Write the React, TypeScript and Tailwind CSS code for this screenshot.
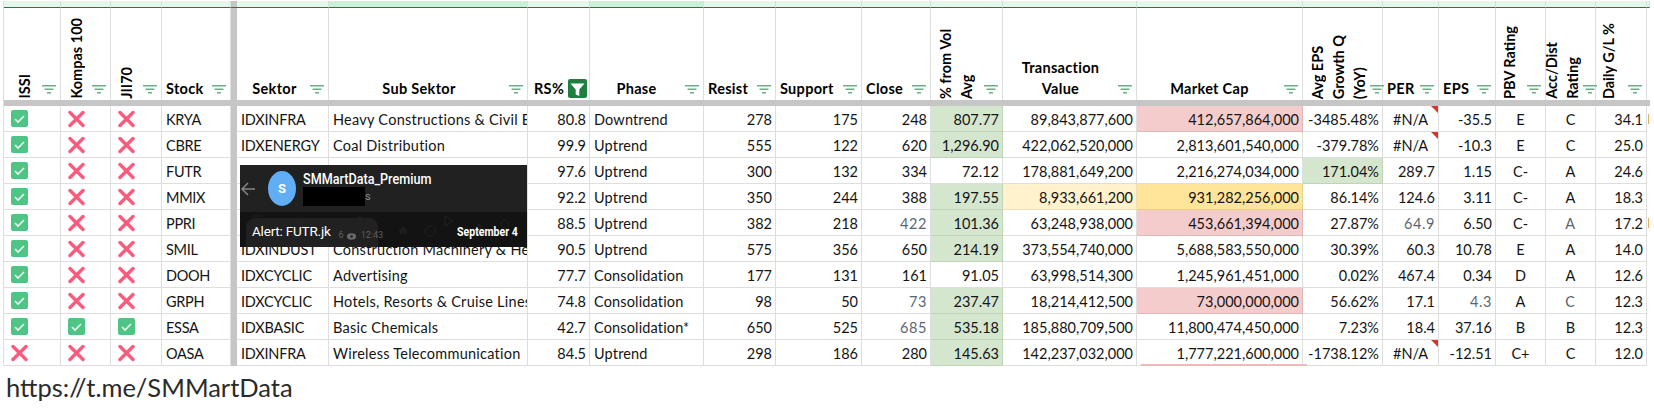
import type { ReactNode } from "react";

type Tone = "g" | "p" | "ly" | "gold" | undefined;

const TONES: Record<string, string> = {
  g: "bg-[#d5e6cf] border-[#bdd4b5]",
  p: "bg-[#f4cccc] border-[#e5b5b5]",
  ly: "bg-[#fff2cc] border-[#eedfb5]",
  gold: "bg-[#ffe599] border-[#e8cf8a]",
};

const WIDTHS = [57, 50, 51, 69, 6, 92, 199, 62, 114, 72, 86, 69, 72, 134, 166, 80, 56, 57, 50, 50, 51, 3];

type Row = {
  flags: [boolean, boolean, boolean];
  stock: string;
  sektor: string;
  sub: string;
  rs: string;
  phase: string;
  resist: string;
  support: string;
  close: string;
  vol: string;
  volTone?: Tone;
  tx: string;
  txTone?: Tone;
  cap: string;
  capTone?: Tone;
  growth: string;
  growthTone?: Tone;
  per: string;
  eps: string;
  pbv: string;
  acc: string;
  daily: string;
};

const ROWS: Row[] = [
  { flags: [true, false, false], stock: "KRYA", sektor: "IDXINFRA", sub: "Heavy Constructions & Civil Engineering", rs: "80.8", phase: "Downtrend", resist: "278", support: "175", close: "248", vol: "807.77", volTone: "g", tx: "89,843,877,600", cap: "412,657,864,000", capTone: "p", growth: "-3485.48%", per: "#N/A", eps: "-35.5", pbv: "E", acc: "C", daily: "34.1" },
  { flags: [true, false, false], stock: "CBRE", sektor: "IDXENERGY", sub: "Coal Distribution", rs: "99.9", phase: "Uptrend", resist: "555", support: "122", close: "620", vol: "1,296.90", volTone: "g", tx: "422,062,520,000", cap: "2,813,601,540,000", growth: "-379.78%", per: "#N/A", eps: "-10.3", pbv: "E", acc: "C", daily: "25.0" },
  { flags: [true, false, false], stock: "FUTR", sektor: "", sub: "", rs: "97.6", phase: "Uptrend", resist: "300", support: "132", close: "334", vol: "72.12", tx: "178,881,649,200", cap: "2,216,274,034,000", growth: "171.04%", growthTone: "g", per: "289.7", eps: "1.15", pbv: "C-", acc: "A", daily: "24.6" },
  { flags: [true, false, false], stock: "MMIX", sektor: "", sub: "", rs: "92.2", phase: "Uptrend", resist: "350", support: "244", close: "388", vol: "197.55", volTone: "g", tx: "8,933,661,200", txTone: "ly", cap: "931,282,256,000", capTone: "gold", growth: "86.14%", per: "124.6", eps: "3.11", pbv: "C-", acc: "A", daily: "18.3" },
  { flags: [true, false, false], stock: "PPRI", sektor: "", sub: "", rs: "88.5", phase: "Uptrend", resist: "382", support: "218", close: "422", vol: "101.36", volTone: "g", tx: "63,248,938,000", cap: "453,661,394,000", capTone: "p", growth: "27.87%", per: "64.9", eps: "6.50", pbv: "C-", acc: "A", daily: "17.2" },
  { flags: [true, false, false], stock: "SMIL", sektor: "IDXINDUST", sub: "Construction Machinery & Heavy Equipment", rs: "90.5", phase: "Uptrend", resist: "575", support: "356", close: "650", vol: "214.19", volTone: "g", tx: "373,554,740,000", cap: "5,688,583,550,000", growth: "30.39%", per: "60.3", eps: "10.78", pbv: "E", acc: "A", daily: "14.0" },
  { flags: [true, false, false], stock: "DOOH", sektor: "IDXCYCLIC", sub: "Advertising", rs: "77.7", phase: "Consolidation", resist: "177", support: "131", close: "161", vol: "91.05", tx: "63,998,514,300", cap: "1,245,961,451,000", growth: "0.02%", per: "467.4", eps: "0.34", pbv: "D", acc: "A", daily: "12.6" },
  { flags: [true, false, false], stock: "GRPH", sektor: "IDXCYCLIC", sub: "Hotels, Resorts & Cruise Lines", rs: "74.8", phase: "Consolidation", resist: "98", support: "50", close: "73", vol: "237.47", volTone: "g", tx: "18,214,412,500", cap: "73,000,000,000", capTone: "p", growth: "56.62%", per: "17.1", eps: "4.3", pbv: "A", acc: "C", daily: "12.3" },
  { flags: [true, true, true], stock: "ESSA", sektor: "IDXBASIC", sub: "Basic Chemicals", rs: "42.7", phase: "Consolidation*", resist: "650", support: "525", close: "685", vol: "535.18", volTone: "g", tx: "185,880,709,500", cap: "11,800,474,450,000", growth: "7.23%", per: "18.4", eps: "37.16", pbv: "B", acc: "B", daily: "12.3" },
  { flags: [false, false, false], stock: "OASA", sektor: "IDXINFRA", sub: "Wireless Telecommunication", rs: "84.5", phase: "Uptrend", resist: "298", support: "186", close: "280", vol: "145.63", volTone: "g", tx: "142,237,032,000", cap: "1,777,221,600,000", growth: "-1738.12%", per: "#N/A", eps: "-12.51", pbv: "C+", acc: "C", daily: "12.0" },
];

function FilterIcon() {
  return (
    <svg width="14" height="9" viewBox="0 0 14 9" className="shrink-0">
      <path d="M0 .75h14M2.5 4.25h9M5 7.75h4" stroke="#6fae84" strokeWidth="1.4" />
    </svg>
  );
}

function ActiveFilter() {
  return (
    <svg width="19" height="19" viewBox="0 0 19 19" className="shrink-0">
      <rect width="19" height="19" rx="2" fill="#1f7f3f" />
      <path d="M2.5 4.5h14L11.3 10.5V17L7.7 15.4V10.5z" fill="#fff" />
    </svg>
  );
}

function Check() {
  return (
    <svg width="17" height="17" viewBox="0 0 17 17">
      <rect width="17" height="17" rx="2" fill="#4fc585" />
      <path d="M4 9l3 3 6-6" fill="none" stroke="#e9f9ef" strokeWidth="1.6" />
    </svg>
  );
}

function Cross() {
  return (
    <svg width="17" height="18" viewBox="0 0 17 18">
      <path d="M2 2.5l13 13M15 2.5l-13 13" fill="none" stroke="#fb5a7c" strokeWidth="3.4" strokeLinecap="round" />
    </svg>
  );
}

function Flag({ on }: { on: boolean }) {
  return <td className="border-r border-b border-[#dedede] pl-[7px]">{on ? <Check /> : <Cross />}</td>;
}

// bottom-aligned rotated header; lines run bottom to top
function VHead({ lines, className = "", inner = "" }: { lines: string[]; className?: string; inner?: string }) {
  return (
    <th className={`border-r border-[#dedede] align-bottom p-0 ${className}`}>
      <div className="flex items-end justify-between pr-[4px] pb-[1px]">
        <div className={`flex ${inner}`}>
          {lines.map((l) => (
            <span key={l} className="[writing-mode:vertical-rl] rotate-180 whitespace-nowrap leading-[21px] text-left">
              {l}
            </span>
          ))}
        </div>
        <span className="mb-[5px]">
          <FilterIcon />
        </span>
      </div>
    </th>
  );
}

function HHead({ children, center, shift = "" }: { children: ReactNode; center?: boolean; shift?: string }) {
  return (
    <th className="border-r border-[#dedede] align-bottom p-0">
      <div className="flex items-end justify-between pr-[4px] pb-[1px] pl-[4px]">
        <span className={`leading-[21px] tracking-[0.3px] whitespace-nowrap ${center ? "flex-1 text-center" : "text-left"} ${shift}`}>
          {children}
        </span>
        <span className="mb-[5px]">
          <FilterIcon />
        </span>
      </div>
    </th>
  );
}

function Td({ children, align = "r", tone, faint, text = "" }: { children?: ReactNode; align?: "l" | "r" | "c"; tone?: Tone; faint?: boolean; text?: string }) {
  const a = align === "r" ? "text-right pr-[3px]" : align === "l" ? "text-left pl-[4px]" : "text-center";
  return (
    <td
      className={`border-r border-b pt-[3px] whitespace-nowrap overflow-hidden ${a} ${tone ? TONES[tone] : "border-[#dedede]"} ${faint ? "text-[#5c6670] tracking-[0.6px]" : ""} ${text}`}
    >
      {children}
    </td>
  );
}

function Overlay() {
  return (
    <div className="absolute left-[240px] top-[165px] w-[287px] h-[82px] flex flex-col font-['Roboto',sans-serif] text-white">
      <div className="h-[47px] bg-[#212121] flex items-center pl-[1px]">
        <svg width="14" height="14" viewBox="0 0 14 14">
          <path d="M14 7H1.5M7 1L1 7l6 6" fill="none" stroke="#858585" strokeWidth="1.5" />
        </svg>
        <div className="ml-[13px] w-[28px] h-[35px] rounded-[50%] bg-[#62aef5] flex items-center justify-center text-[13px] font-bold">
          S
        </div>
        <div className="ml-[7px] relative self-stretch w-[200px]">
          <div className="absolute left-0 top-[5px] origin-left scale-x-[0.84] text-[15px] leading-[18px] font-medium whitespace-nowrap">
            SMMartData_Premium
          </div>
          <div className="absolute left-0 top-[22px] w-[62px] h-[19px] bg-black" />
          <div className="absolute left-[62px] top-[26px] text-[11px] leading-[12px] text-[#8a8a8a]">s</div>
        </div>
      </div>
      <div className="flex-1 bg-[#131313] relative flex items-end justify-between pl-[6px] pr-[9px]">
        <svg width="287" height="35" viewBox="0 0 287 35" className="absolute left-0 top-0">
          <g fill="none" stroke="#232323" strokeWidth="1">
            <path d="M160 22l3-7 3 7-7-4h8z" />
            <path d="M190 14a5 5 0 1 0 .1 0zM205 4l8 5-8 5zM235 20l4-8 4 8zM265 8a4 4 0 1 0 .1 0z" />
            <path d="M12 4h10M60 6l5 4-5 3M120 5a4 4 0 1 0 .1 0z" />
          </g>
        </svg>
        <div className="relative h-[29px] w-[132px] bg-[#212121] rounded-t-[9px] flex items-center pl-[6px]">
          <span className="text-[13.5px] leading-[16px] tracking-[-0.2px] whitespace-nowrap -mt-[4px]">Alert: FUTR.jk</span>
          <span className="ml-[8px] mt-[7px] flex items-center gap-[3px] text-[9px] text-[#5f5f5f] whitespace-nowrap">
            6
            <svg width="9" height="7" viewBox="0 0 9 7">
              <ellipse cx="4.5" cy="3.5" rx="4.5" ry="3.2" fill="#6a6a6a" />
              <circle cx="4.5" cy="3.5" r="1.3" fill="#212121" />
            </svg>
            <span className="ml-[2px]">12:43</span>
          </span>
        </div>
        <span className="relative self-center origin-right scale-x-[0.78] text-[13.5px] font-bold whitespace-nowrap mb-[-3px]">
          September 4
        </span>
      </div>
    </div>
  );
}

export default function App() {
  return (
    <div className="relative w-[1654px] h-[409px] bg-white overflow-hidden pt-[1px] text-[14.5px] text-[#141414] font-['Lato',sans-serif]">
      <table className="ml-[3px] table-fixed border-separate border-spacing-0 border-l border-[#dedede] w-[1647px]">
        <colgroup>
          {WIDTHS.map((w, i) => (
            <col key={i} style={{ width: w }} />
          ))}
        </colgroup>
        <thead>
          <tr className="h-[7px]">
            {WIDTHS.map((_, i) =>
              i === 4 ? (
                <th key={i} className="bg-[#c6c6c6] p-0 border-b border-[#1f7a45]" />
              ) : (
                <th
                  key={i}
                  className={`p-0 border-r border-r-[#cfe3d6] border-b border-b-[#1f7a45] ${i === 6 || i === 8 ? "bg-[#cdeed9]" : "bg-[#e7f6ed]"}`}
                />
              ),
            )}
          </tr>
          <tr className="h-[92px] font-bold text-black">
            <VHead lines={["ISSI"]} className="pl-[10px]" />
            <VHead lines={["Kompas 100"]} className="pl-[5px]" />
            <VHead lines={["JII70"]} className="pl-[5px]" />
            <HHead>Stock</HHead>
            <th className="bg-[#c6c6c6] p-0" />
            <HHead center shift="pr-[2px]">Sektor</HHead>
            <HHead center shift="pr-[4px]">Sub Sektor</HHead>
            <th className="border-r border-[#dedede] align-bottom p-0">
              <div className="flex items-end justify-between pl-[6px] pr-[2px] pb-[2px]">
                <span className="leading-[21px] mb-[-1px] tracking-[0.3px]">RS%</span>
                <ActiveFilter />
              </div>
            </th>
            <HHead center shift="pr-[6px]">Phase</HHead>
            <HHead>Resist</HHead>
            <HHead>Support</HHead>
            <HHead>Close</HHead>
            <VHead lines={["% from Vol", "Avg"]} className="pl-[4px]" />
            <HHead center shift="pr-[4px]">
              Transaction
              <br />
              Value
            </HHead>
            <HHead center shift="pr-[6px]">Market Cap</HHead>
            <VHead lines={["Avg EPS", "Growth Q", "(YoY)"]} className="pl-[4px]" />
            <HHead>PER</HHead>
            <HHead>EPS</HHead>
            <VHead lines={["PBV Rating"]} className="pl-[3px]" />
            <VHead lines={["Acc/Dist", "Rating"]} inner="-ml-[5px]" />
            <VHead lines={["Daily G/L %"]} className="pl-[2px]" />
            <th className="p-0" />
          </tr>
          <tr className="h-[6px] bg-[#c6c6c6]">
            <th colSpan={WIDTHS.length} className="p-0" />
          </tr>
        </thead>
        <tbody>
          {ROWS.map((r) => (
            <tr key={r.stock} className="h-[26px]">
              <Flag on={r.flags[0]} />
              <Flag on={r.flags[1]} />
              <Flag on={r.flags[2]} />
              <Td align="l" text="tracking-[-0.3px]">{r.stock}</Td>
              <td className="bg-[#c6c6c6] p-0" />
              <Td align="l" text="tracking-[-0.2px]">{r.sektor}</Td>
              <Td align="l" text="tracking-[0.25px]">{r.sub}</Td>
              <Td>{r.rs}</Td>
              <Td align="l" text="tracking-[0.15px]">{r.phase}</Td>
              <Td>{r.resist}</Td>
              <Td>{r.support}</Td>
              <Td faint={r.close === "73" || r.close === "685" || r.close === "422"}>{r.close}</Td>
              <Td tone={r.volTone}>{r.vol}</Td>
              <Td tone={r.txTone}>{r.tx}</Td>
              <Td tone={r.capTone}>{r.cap}</Td>
              <Td tone={r.growthTone}>{r.growth}</Td>
              <td className="relative border-r border-b border-[#dedede] p-0 pt-[3px]">
                {r.per === "#N/A" ? (
                  <div className="text-center">
                    {r.per}
                    <span className="absolute right-0 top-0 w-0 h-0 border-t-[7px] border-l-[7px] border-t-[#d9342b] border-l-transparent" />
                  </div>
                ) : (
                  <div className={`text-right pr-[3px] ${r.per === "64.9" ? "text-[#5c6670] tracking-[0.6px]" : ""}`}>{r.per}</div>
                )}
              </td>
              <Td faint={r.eps === "4.3"}>{r.eps}</Td>
              <Td align="c">{r.pbv}</Td>
              <Td align="c" faint={r.stock === "PPRI" || r.stock === "GRPH"}>{r.acc}</Td>
              <Td>{r.daily}</Td>
              <td className="p-0 align-middle">
                {(r.stock === "KRYA" || r.stock === "PPRI") && <div className="ml-[1px] w-[1px] h-[10px] bg-[#e0b060]" />}
              </td>
            </tr>
          ))}
        </tbody>
      </table>
      <Overlay />
      <div className="absolute left-[1141px] top-[364px] w-[166px] h-[2px] bg-[#eeb9b9]" />
      <p className="mt-[7px] ml-[6px] text-[25.5px] leading-[29px] text-[#2b2b2b]">https://t.me/SMMartData</p>
    </div>
  );
}
